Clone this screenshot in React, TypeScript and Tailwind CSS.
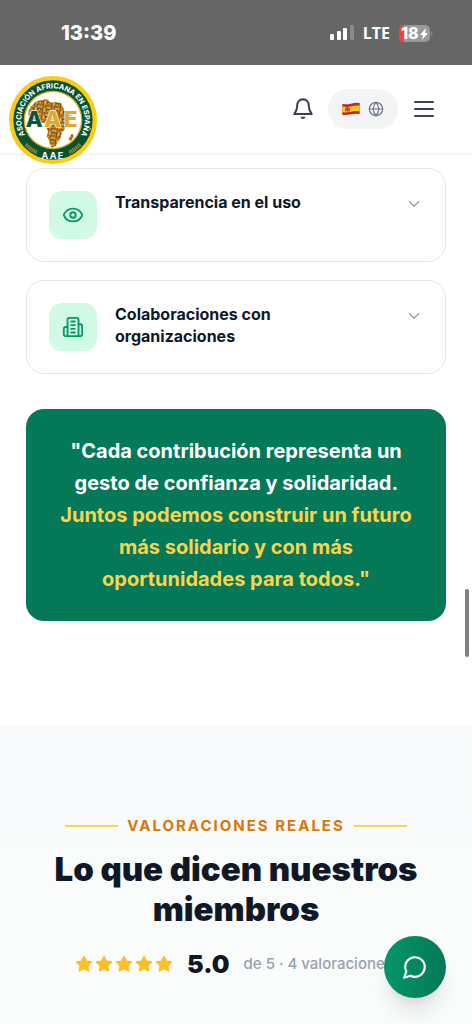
import { ChevronDown, Eye, Globe } from 'lucide-react';
import type { ReactNode } from 'react';

function Logo() {
  return (
    <svg viewBox="28 33 264 264" className="size-[88px]" role="img" aria-label="Asociación Africana en España">
      <defs>
        <path id="arcTop" d="M 99 238 A 95 95 0 1 1 221 238" />
        <pattern id="kente" width="26" height="22" patternUnits="userSpaceOnUse" patternTransform="rotate(8)">
          <rect width="26" height="22" fill="#dc8a24" />
          <rect width="11" height="9" fill="#2b5a2a" />
          <path d="M2 8 6 2l4 6z" fill="#f0c040" />
          <rect x="14" y="0" width="3" height="11" fill="#8a2a18" />
          <rect x="20" y="0" width="3" height="11" fill="#efba3c" />
          <rect x="0" y="12" width="13" height="3" fill="#9c3a18" />
          <rect x="0" y="18" width="13" height="2" fill="#f0c656" />
          <rect x="15" y="12" width="10" height="8" fill="#3a2c17" />
          <path d="m16 16 4-4 4 4-4 4z" fill="#e0a02b" />
        </pattern>
      </defs>
      <circle cx="160" cy="165" r="132" fill="#facc15" />
      <circle cx="160" cy="165" r="119" fill="#07532f" />
      <circle cx="160" cy="165" r="88" fill="#d9ad2e" />
      <circle cx="160" cy="165" r="84" fill="#fff" />
      <path
        d="M110 109 124 106 136 103 147 104 149 111 158 113 165 110 178 113 184 113 188 123 195 138 201 149 216 151 213 159 203 172 196 183 194 195 186 203 184 216 177 229 168 243 158 248 153 244 148 229 142 213 145 200 138 187 136 175 127 173 116 178 102 174 90 160 86 147 88 134 96 122 104 114Z"
        fill="url(#kente)"
      />
      <path d="M218 205 222 213 216 226 210 229 207 223 211 214Z" fill="url(#kente)" />
      <g fontFamily="Inter, sans-serif" fontWeight="800" fontSize="66" stroke="#fff" strokeWidth="4" paintOrder="stroke">
        <text x="78" y="187" fill="#0a5737">A</text>
        <text x="134 193" y="187" fill="#dfa92f">AE</text>
      </g>
      <g fill="#fff" fontFamily="Inter, sans-serif" fontWeight="700">
        <text fontSize="22" textAnchor="middle">
          <textPath href="#arcTop" startOffset="50%">ASOCIACIÓN AFRICANA EN ESPAÑA</textPath>
        </text>
        <text fontSize="27" x="160" y="281" textAnchor="middle" letterSpacing="4">AAE</text>
      </g>
      <g fill="none" stroke="#a98426" strokeWidth="12" strokeDasharray="4 2">
        <path d="M79 238q15 17 34 25" />
        <path d="M241 238q-15 17-34 25" />
      </g>
    </svg>
  );
}

function SpainFlag() {
  return (
    <svg viewBox="0 0 54 40" className="h-[14px] w-[18px]" aria-hidden="true">
      <path d="M1 4Q14 8 27 4T53 2V35Q40 33 27 36T1 38Z" fill="#c8202f" />
      <path d="M1 12Q14 16 27 12T53 10V27Q40 25 27 28T1 30Z" fill="#fcc91c" />
      <path d="M9 17h4v10H9zM20 17h4v10h-4z" fill="#a5642d" />
      <path d="M13 14h7v12q-3 4-7 0z" fill="#b9412f" />
    </svg>
  );
}

function StatusBar() {
  return (
    <div className="flex h-[65px] items-center justify-between bg-[#666666] pr-[39px] pl-[61px] text-white">
      <span className="text-xl leading-6 font-extrabold">13:39</span>
      <div className="flex items-center gap-[9px]">
        <svg viewBox="0 0 24 16" className="h-4 w-6" aria-label="Señal">
          <rect x="0" y="9" width="4" height="6" rx="1" fill="#fff" />
          <rect x="7" y="6" width="4" height="9" rx="1" fill="#fff" />
          <rect x="13" y="3" width="4" height="12" rx="1" fill="#fff" />
          <rect x="20" y="0" width="4" height="15" rx="1" fill="#8b8b8b" />
        </svg>
        <span className="font-['Open_Sans',sans-serif] text-base leading-6 font-bold">LTE</span>
        <svg viewBox="0 -4 34 24" className="h-6 w-[34px]" aria-label="Batería 18 %">
          <defs>
            <clipPath id="cell"><rect width="31" height="17" rx="5" /></clipPath>
          </defs>
          <g clipPath="url(#cell)">
            <rect width="31" height="17" fill="#999" />
            <rect width="5" height="17" fill="#ff3b3f" />
          </g>
          <path d="M32 6q3 2.500 0 5z" fill="#8b8b8b" />
          <text x="2" y="14" fontFamily="Inter, sans-serif" fontWeight="800" fontSize="16" fill="#fff">18</text>
          <path d="m27 3-6 7h3l-1 5 6-7h-3z" fill="#fff" />
        </svg>
      </div>
    </div>
  );
}

function Header() {
  return (
    <header className="relative z-10 flex h-[89px] items-center justify-between border-b border-gray-100 bg-white pr-[38px] pl-[9px] shadow-xs">
      <a href="#inicio" className="relative top-[11px]">
        <Logo />
      </a>
      <div className="flex items-center gap-[14px] text-gray-700">
        <button type="button" aria-label="Notificaciones">
          <svg viewBox="0 0 24 24" className="size-[22px]" fill="none" stroke="currentColor" strokeWidth="2.200" strokeLinejoin="round">
            <path d="M12 1.500C8 1.500 5.700 4.300 5.700 8.200 5.700 13 4.500 14.300 2.500 17.500H21.500C19.500 14.300 18.300 13 18.300 8.200 18.300 4.300 16 1.500 12 1.500Z" />
            <path d="M9.200 20.500h5.600q-.6 2.500-2.800 2.500t-2.800-2.500Z" fill="currentColor" stroke="none" />
          </svg>
        </button>
        <button type="button" aria-label="Cambiar idioma" className="flex h-10 items-center gap-2 rounded-full bg-gray-100 px-[14px]">
          <SpainFlag />
          <Globe className="size-4 text-gray-500" strokeWidth={1.8} />
        </button>
        <button type="button" aria-label="Menú">
          <svg viewBox="0 0 22 18" className="h-[18px] w-[22px]" fill="none" stroke="currentColor" strokeWidth="2" strokeLinecap="round">
            <path d="M3 2h18M3 9h18M3 16h18" />
          </svg>
        </button>
      </div>
    </header>
  );
}

function BuildingIcon() {
  return (
    <svg viewBox="0 0 24 24" className="size-[22px]" fill="none" stroke="currentColor" strokeWidth="2" strokeLinecap="round" strokeLinejoin="round" aria-hidden="true">
      <path d="M6 22V4a2 2 0 0 1 2-2h8a2 2 0 0 1 2 2v18Z" />
      <path d="M6 12H4a2 2 0 0 0-2 2v6a2 2 0 0 0 2 2h2" />
      <path d="M18 9h2a2 2 0 0 1 2 2v9a2 2 0 0 1-2 2h-2" />
      <path d="M10 6h4M10 10h4M10 14h4M10 18h4" />
    </svg>
  );
}

function StarIcon() {
  return (
    <svg viewBox="0 0 24 24" className="size-[18px]" fill="currentColor" stroke="currentColor" strokeWidth="2" strokeLinejoin="round" aria-hidden="true">
      <path d="M12 2 15.090 8.260 22 9.270 17 14.140 18.180 21.020 12 17.770 5.820 21.020 7 14.140 2 9.270 8.910 8.260Z" />
    </svg>
  );
}

function AccordionCard({ icon, title }: { icon: ReactNode; title: string }) {
  return (
    <button
      type="button"
      aria-expanded="false"
      className="flex w-full items-start gap-[18px] rounded-[18px] border border-gray-200 bg-white p-[22px] text-left"
    >
      <span className="flex size-12 shrink-0 items-center justify-center rounded-[13px] bg-[#d1fae5] text-[#059669]">
        {icon}
      </span>
      <span className="flex-1 pr-8 text-base leading-[22px] font-bold text-gray-900">{title}</span>
      <ChevronDown className="mt-1 size-[18px] shrink-0 text-gray-400" strokeWidth={2} />
    </button>
  );
}

export default function App() {
  return (
    <div className="relative flex min-h-screen flex-col overflow-hidden bg-white font-['Inter',sans-serif]">
      <StatusBar />
      <Header />
      <main className="flex flex-1 flex-col">
        <section className="px-[26px] pt-[14px] pb-[106px]">
          <div className="flex flex-col gap-[18px]">
            <AccordionCard icon={<Eye className="size-[22px]" />} title="Transparencia en el uso" />
            <AccordionCard icon={<BuildingIcon />} title="Colaboraciones con organizaciones" />
          </div>
          <blockquote className="mt-[35px] rounded-[18px] bg-[#047857] p-[26px] text-center text-xl leading-8 font-bold text-white">
            "Cada contribución representa un gesto de confianza y solidaridad.{' '}
            <span className="text-[#fcd34d]">
              Juntos podemos construir un futuro más solidario y con más oportunidades para todos."
            </span>
          </blockquote>
        </section>
        <section className="flex flex-1 flex-col items-center bg-linear-to-b from-[#f9fafb] to-[#fbfcfc] px-[26px] pt-[88px]">
          <div className="flex items-center gap-[9px]">
            <span className="h-[2px] w-[53px] bg-[#fcd34d]" />
            <p className="text-[15px] leading-[22px] font-bold tracking-[2px] text-[#d97706] uppercase">Valoraciones reales</p>
            <span className="h-[2px] w-[53px] bg-[#fcd34d]" />
          </div>
          <h2 className="mt-3 text-center text-[33px] leading-10 font-black text-gray-900">Lo que dicen nuestros miembros</h2>
          <div className="mt-[19px] flex items-center gap-[14px] pr-1 whitespace-nowrap">
            <div className="flex gap-[2px] text-[#fbbf24]" role="img" aria-label="5 de 5 estrellas">
              {[1, 2, 3, 4, 5].map((n) => (
                <StarIcon key={n} />
              ))}
            </div>
            <span className="text-[25px] leading-8 font-black text-gray-900">5.0</span>
            <span className="text-[15px] leading-[22px] font-medium text-gray-400">de 5 · 4 valoraciones</span>
          </div>
        </section>
      </main>
      <button
        type="button"
        aria-label="Abrir chat"
        className="absolute right-[26px] bottom-[26px] z-20 flex size-[62px] items-center justify-center rounded-full bg-linear-to-r from-[#059669] to-[#047857] text-white shadow-xl"
      >
        <svg viewBox="0 0 24 24" className="size-[26px]" fill="none" stroke="currentColor" strokeWidth="2" strokeLinecap="round" strokeLinejoin="round" aria-hidden="true">
          <path d="M7.900 20A9 9 0 1 0 4 16.100L2 22Z" />
        </svg>
      </button>
      <div className="absolute top-[589px] right-[3px] h-[68px] w-1 rounded-full bg-[#808080]" />
    </div>
  );
}
